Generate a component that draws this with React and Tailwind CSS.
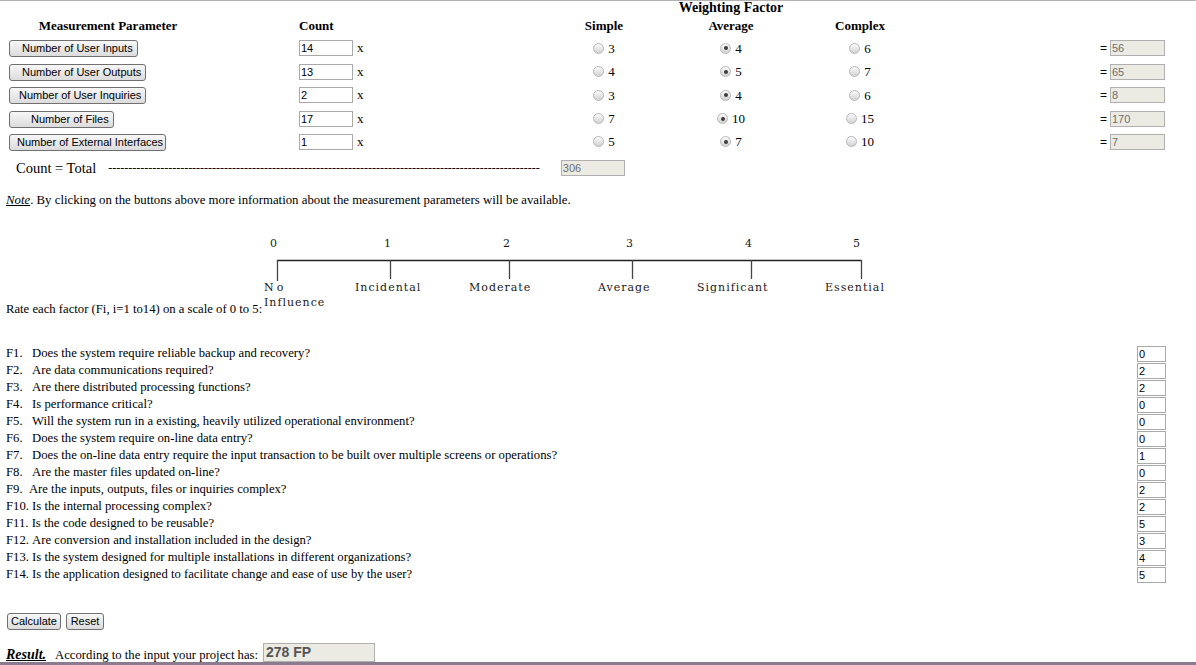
import React from 'react';

const serif = "font-['Liberation_Serif',serif]";
const sans = "font-['Liberation_Sans',Arial,sans-serif]";

const params = [
    { label: 'Number of User Inputs', w: 'w-[129px]', pl: 'pl-[12px]', count: '14', weights: [3, 4, 6], result: '56' },
    { label: 'Number of User Outputs', w: 'w-[137px]', pl: 'pl-[12px]', count: '13', weights: [4, 5, 7], result: '65' },
    { label: 'Number of User Inquiries', w: 'w-[137px]', pl: 'pl-[9px]', count: '2', weights: [3, 4, 6], result: '8' },
    { label: 'Number of Files', w: 'w-[105px]', pl: 'pl-[21px]', count: '17', weights: [7, 10, 15], result: '170' },
    { label: 'Number of External Interfaces', w: 'w-[157px]', pl: 'pl-[7px]', count: '1', weights: [5, 7, 10], result: '7' },
];

const questions = [
    ['F1.\u00a0\u00a0\u00a0', 'Does the system require reliable backup and recovery?', '0'],
    ['F2.\u00a0\u00a0\u00a0', 'Are data communications required?', '2'],
    ['F3.\u00a0\u00a0\u00a0', 'Are there distributed processing functions?', '2'],
    ['F4.\u00a0\u00a0\u00a0', 'Is performance critical?', '0'],
    ['F5.\u00a0\u00a0\u00a0', 'Will the system run in a existing, heavily utilized operational environment?', '0'],
    ['F6.\u00a0\u00a0\u00a0', 'Does the system require on-line data entry?', '0'],
    ['F7.\u00a0\u00a0\u00a0', 'Does the on-line data entry require the input transaction to be built over multiple screens or operations?', '1'],
    ['F8.\u00a0\u00a0\u00a0', 'Are the master files updated on-line?', '0'],
    ['F9.\u00a0\u00a0', 'Are the inputs, outputs, files or inquiries complex?', '2'],
    ['F10.\u00a0', 'Is the internal processing complex?', '2'],
    ['F11.\u00a0', 'Is the code designed to be reusable?', '5'],
    ['F12.\u00a0', 'Are conversion and installation included in the design?', '3'],
    ['F13.\u00a0', 'Is the system designed for multiple installations in different organizations?', '4'],
    ['F14.\u00a0', 'Is the application designed to facilitate change and ease of use by the user?', '5'],
];

// old-style grey radio
const Radio = ({ checked }) => (
    <span className="inline-flex items-center justify-center w-[11px] h-[11px] rounded-full border border-[#b8b8b8] bg-linear-to-b from-[#fbfbfb] to-[#d2d2d2]">
        {checked && <span className="w-[4px] h-[4px] rounded-full bg-[#3c3c3c]" />}
    </span>
);

const Button = ({ children, className }) => (
    <button className={`h-[17px] border border-[#707070] rounded-[3px] bg-linear-to-b from-[#f7f7f7] to-[#dcdcdc] text-[11px] leading-none text-black ${sans} ${className}`}>
        {children}
    </button>
);

const Field = ({ value, className, disabled }) => (
    <input
        readOnly
        value={value}
        className={`h-[16px] border px-[1px] text-[11px] leading-none outline-none ${sans} ${disabled ? 'bg-[#ebebe4] border-[#b0b0b0] text-[#6d6d6d]' : 'bg-white border-[#a9a9a9] text-black'} ${className}`}
    />
);

const Scale = () => {
    const nums = [12, 126, 245, 368, 487, 595];
    const ticks = [15, 128, 247, 370, 489, 599];
    const labels = [['Incidental', 93], ['Moderate', 207], ['Average', 336], ['Significant', 435], ['Essential', 563]];
    return (
        <svg width="625" height="78" viewBox="0 0 625 78" className="inline-block align-baseline">
            <g fontFamily="DejaVu Serif, serif" fontSize="11" fill="#1a1a1a" letterSpacing="1">
                {nums.map((x, i) => (
                    <text key={i} x={x} y="12" textAnchor="middle">{i}</text>
                ))}
                <text x="2" y="56" letterSpacing="3">No</text>
                <text x="2" y="71">Influence</text>
                {labels.map(([t, x]) => (
                    <text key={t} x={x} y="56">{t}</text>
                ))}
            </g>
            <line x1="15" y1="25.5" x2="599.5" y2="25.5" stroke="#222" strokeWidth="1.3" />
            {ticks.map((x, i) => (
                <line key={i} x1={x + 0.5} y1="25" x2={x + 0.5} y2={i === 0 ? 46 : 44} stroke="#444" strokeWidth="1.3" />
            ))}
        </svg>
    );
};

export default function App() {
    return (
        <div className={`h-[665px] w-[1196px] overflow-hidden bg-white text-black flex flex-col border-t border-[#b3b3b3] ${serif}`}>
            {/* Weighting factor heading */}
            <div className="flex h-[14px] items-center">
                <div className="w-[654px]" />
                <div className="w-[154px] text-center text-[14px] font-bold leading-[14px]">Weighting Factor</div>
            </div>

            {/* column headings */}
            <div className="flex h-[22px] items-center text-[13px] font-bold">
                <div className="w-[299px]">
                    <div className="w-[216px] text-center">Measurement Parameter</div>
                </div>
                <div className="w-[255px]">Count</div>
                <div className="w-[100px] text-center">Simple</div>
                <div className="w-[154px] text-center">Average</div>
                <div className="w-[104px] text-center">Complex</div>
            </div>

            {params.map((p) => (
                <div key={p.label} className="flex h-[24px] items-center text-[13px]">
                    <div className="w-[299px] pl-[9px]">
                        <Button className={`${p.w} ${p.pl} text-left`}>{p.label}</Button>
                    </div>
                    <div className="w-[255px] flex items-center">
                        <Field value={p.count} className="w-[54px]" />
                        <span className="ml-[4px]">x</span>
                    </div>
                    {['w-[100px]', 'w-[154px]', 'w-[104px]'].map((w, i) => (
                        <div key={w} className={`${w} flex items-center justify-center gap-[4px]`}>
                            <Radio checked={i === 1} />
                            <span className="leading-none">{p.weights[i]}</span>
                        </div>
                    ))}
                    <div className="w-[188px]" />
                    <div className="flex items-center">
                        <span className={`${sans} text-[12px] w-[10px]`}>=</span>
                        <Field value={p.result} disabled className="w-[55px]" />
                    </div>
                </div>
            ))}

            {/* total */}
            <div className="mt-[3px] flex h-[24px] items-center">
                <span className="ml-[16px] text-[14.5px]">Count = Total</span>
                <span className="ml-[12px] whitespace-nowrap text-[12px] leading-none">
                    {'-'.repeat(108)}
                </span>
                <Field value="306" disabled className="ml-[21px] w-[64px]" />
            </div>

            <div className="mt-[13px] pl-[6px] text-[12.8px] leading-[15px]">
                <span className="italic underline">Note</span>. By clicking on the buttons above more information about the measurement parameters will be available.
            </div>

            <div className="mt-[27px] pl-[6px] text-[12.7px] leading-[15px]">
                Rate each factor (Fi, i=1 to14) on a scale of 0 to 5:<Scale />
            </div>

            <div className="mt-[28px] flex flex-col">
                {questions.map(([n, q, v]) => (
                    <div key={n} className="flex h-[17px] items-center pl-[6px] pr-[30px]">
                        <span className="flex-1 text-[12.7px] leading-none">{n}{q}</span>
                        <Field value={v} className="w-[29px]" />
                    </div>
                ))}
            </div>

            <div className="mt-[30px] flex gap-[5px] pl-[7px]">
                <Button className="w-[54px] text-center">Calculate</Button>
                <Button className="w-[38px] text-center">Reset</Button>
            </div>

            <div className="mt-[13px] flex items-end pl-[6px] h-[19px]">
                <span className="text-[14px] font-bold italic underline leading-none">Result.</span>
                <span className="ml-[9px] text-[12.7px] leading-none">According to the input your project has:</span>
                <input
                    readOnly
                    value="278 FP"
                    className={`ml-[5px] h-[19px] w-[112px] border border-[#b0b0b0] bg-[#ebebe4] px-[2px] text-[14px] font-bold text-[#555] outline-none ${sans}`}
                />
            </div>

            <div className="mt-auto h-[3px] bg-[#8b7b8e]" />
        </div>
    );
}
